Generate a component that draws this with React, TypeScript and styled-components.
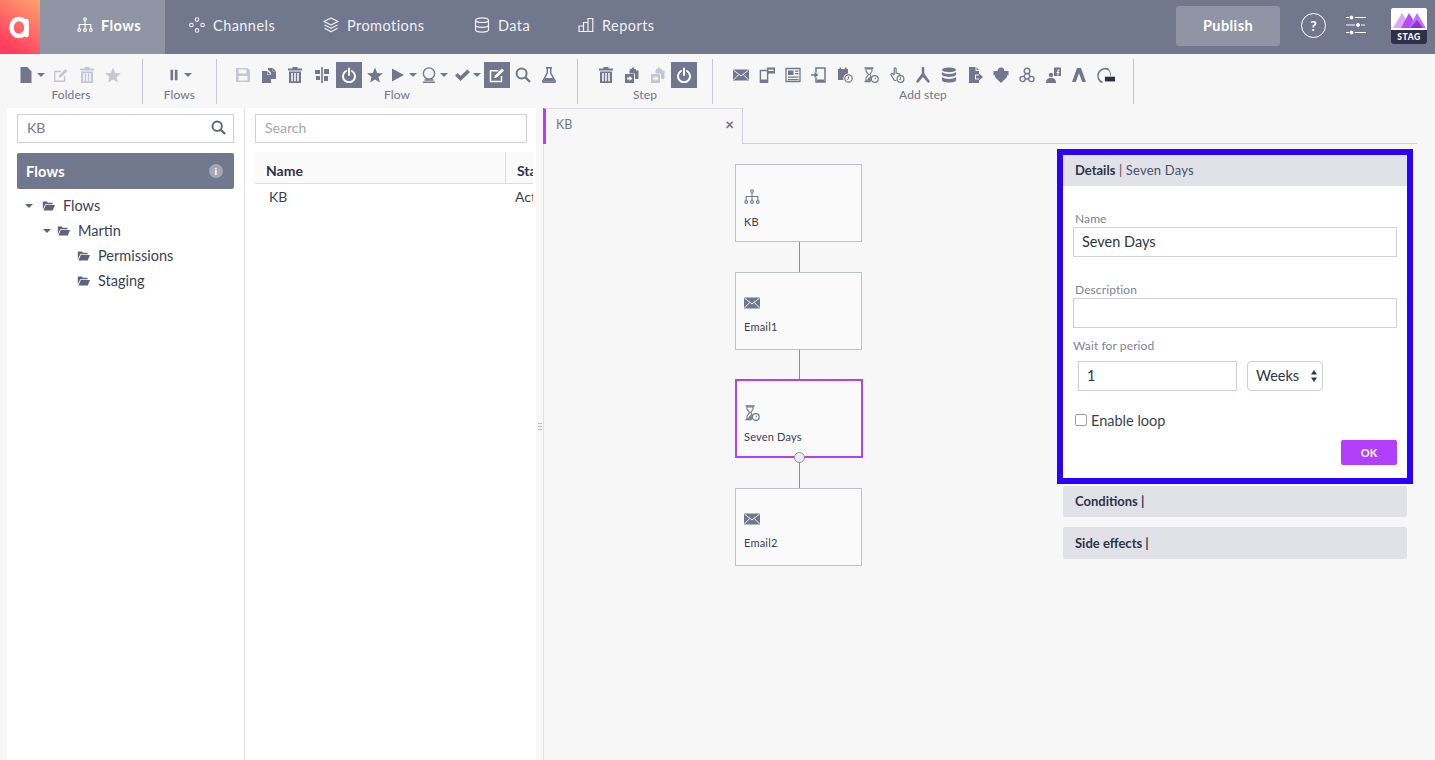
import React from "react";
import styled, { createGlobalStyle } from "styled-components";

const GlobalStyle = createGlobalStyle`
  html, body { margin: 0; padding: 0; height: 100%; background: #f7f7f7; overflow: hidden; }
  body { font-family: "Lato", "Open Sans", sans-serif; color: #2f3349; }
  * { box-sizing: border-box; }
`;

const slate = "#71788d";
const purple = "#b23ffb";

const Page = styled.div`
  width: 1435px;
  height: 760px;
  display: flex;
  flex-direction: column;
  overflow: hidden;
`;

const TopBar = styled.header`
  height: 54px;
  flex: none;
  display: flex;
  align-items: stretch;
  background: ${slate};
`;

const LogoBox = styled.div`
  width: 40px;
  display: flex;
  align-items: center;
  justify-content: center;
  background: linear-gradient(215deg, #ffa46e 0%, #ff3d5e 85%);
`;

const NavTab = styled.div<{ $active?: boolean; $w: number }>`
  width: ${(p) => p.$w}px;
  display: flex;
  align-items: center;
  gap: 8px;
  padding-left: ${(p) => (p.$active ? 37 : 24)}px;
  padding-bottom: 4px;
  font-size: 14.5px;
  font-weight: ${(p) => (p.$active ? 700 : 400)};
  letter-spacing: 0.45px;
  color: ${(p) => (p.$active ? "#fff" : "#f0f1f4")};
  background: ${(p) => (p.$active ? "#9095a6" : "transparent")};
`;

const TopRight = styled.div`
  margin-left: auto;
  display: flex;
  align-items: center;
  padding-right: 8px;
  padding-bottom: 4px;
`;

const PublishButton = styled.button`
  width: 104px;
  height: 40px;
  margin-top: 2px;
  padding-bottom: 3px;
  border: 0;
  border-radius: 3px;
  background: #9095a6;
  color: #fff;
  font: 700 14.5px "Lato", sans-serif;
  letter-spacing: 0.4px;
`;

const HelpCircle = styled.div`
  width: 25px;
  height: 25px;
  margin: 0 0 0 21px;
  border: 1.5px solid #fff;
  border-radius: 50%;
  color: #fff;
  font-size: 14px;
  font-weight: 700;
  display: flex;
  align-items: center;
  justify-content: center;
`;

const SliderSlot = styled.div`
  width: 20px;
  height: 20px;
  margin-left: 20px;
  margin-right: 25px;
  display: flex;
  color: #fff;
`;

const StagBadge = styled.div`
  width: 36px;
  height: 36px;
  margin-top: 2px;
  border-radius: 2px;
  overflow: hidden;
  background: #fff;
  display: flex;
  flex-direction: column;
`;

const StagArt = styled.div`
  height: 22px;
  display: flex;
  align-items: flex-end;
`;

const StagLabel = styled.div`
  flex: 1;
  background: #2d3047;
  color: #fff;
  font-size: 8.5px;
  font-weight: 900;
  letter-spacing: 0.6px;
  display: flex;
  align-items: center;
  justify-content: center;
`;

const ToolBar = styled.div`
  height: 54px;
  flex: none;
  display: flex;
  padding-top: 5px;
`;

const ToolGroup = styled.div<{ $w: number; $pad: number; $line?: boolean }>`
  width: ${(p) => p.$w}px;
  height: 45px;
  padding-left: ${(p) => p.$pad}px;
  border-right: ${(p) => (p.$line ? "1px solid #c5c8d3" : "0")};
  display: flex;
  flex-direction: column;
`;

const ToolRow = styled.div`
  height: 26px;
  margin-top: 3px;
  display: flex;
`;

const ToolLabel = styled.div<{ $pad: number }>`
  margin-left: -${(p) => p.$pad}px;
  margin-top: -1px;
  text-align: center;
  font-size: 12px;
  font-weight: 400;
  letter-spacing: 0.1px;
  color: #6f758b;
`;

const ToolButton = styled.div<{ $active?: boolean; $w?: number; $off?: boolean }>`
  width: ${(p) => p.$w ?? 26}px;
  height: 26px;
  flex: none;
  display: flex;
  align-items: center;
  justify-content: center;
  gap: 3px;
  background: ${(p) => (p.$active ? slate : "transparent")};
  color: ${(p) => (p.$active ? "#fff" : p.$off ? "#c4c7d2" : slate)};
`;

const Caret = styled.span<{ $color?: string; $size?: number }>`
  width: 0;
  height: 0;
  flex: none;
  border-left: ${(p) => p.$size ?? 4}px solid transparent;
  border-right: ${(p) => p.$size ?? 4}px solid transparent;
  border-top: ${(p) => p.$size ?? 4}px solid ${(p) => p.$color ?? slate};
`;

const Body = styled.div`
  flex: 1;
  min-height: 0;
  display: flex;
  padding-left: 7px;
`;

const LeftPanel = styled.aside`
  width: 238px;
  flex: none;
  background: #fff;
  border-right: 1px solid #e4e5ea;
  padding: 6px 10px 0 10px;
`;

const SearchBox = styled.div`
  height: 29px;
  border: 1px solid #cfd0dc;
  background: #fff;
  display: flex;
  align-items: center;
  justify-content: space-between;
  padding: 0 7px 2px 9px;
  font-size: 14px;
  color: ${slate};
`;

const PanelHead = styled.div`
  height: 36px;
  margin-top: 10px;
  border-radius: 2px;
  background: ${slate};
  color: #fff;
  font-size: 14.5px;
  font-weight: 700;
  letter-spacing: 0.2px;
  display: flex;
  align-items: center;
  justify-content: space-between;
  padding: 0 11px 0 9px;
`;

const InfoDot = styled.span`
  width: 14px;
  height: 14px;
  border-radius: 50%;
  background: #a4a8b6;
  color: #fff;
  font-size: 10px;
  font-weight: 900;
  display: flex;
  align-items: center;
  justify-content: center;
`;

const Tree = styled.div`
  margin-top: 4px;
`;

const TreeRow = styled.div<{ $indent: number }>`
  height: 25px;
  padding-left: ${(p) => p.$indent}px;
  display: flex;
  align-items: center;
  font-size: 14.5px;
  color: #3b3f55;
`;

const TreeCaret = styled.span<{ $w: number }>`
  width: ${(p) => p.$w}px;
  display: flex;
`;

const FolderSlot = styled.span`
  width: 21px;
  display: flex;
  color: #5d6379;
`;

const ListPanel = styled.section`
  width: 291px;
  flex: none;
  background: #fff;
  padding: 6px 0 0 10px;
  overflow: hidden;
`;

const ListSearch = styled.input`
  display: block;
  width: 272px;
  height: 29px;
  border: 1px solid #cfd0dc;
  padding: 0 9px 2px;
  font: 14px "Lato", sans-serif;
  outline: none;
  &::placeholder { color: #a4a7b5; }
`;

const ListHead = styled.div`
  height: 32px;
  margin-top: 9px;
  background: #fafafa;
  border-bottom: 1px solid #dcdde3;
  display: grid;
  grid-template-columns: 250px 1fr;
  font-size: 14px;
  font-weight: 700;
  color: #2f3349;
  overflow: hidden;
`;

const HeadCell = styled.div<{ $divider?: boolean }>`
  padding: 10px 0 0 11px;
  border-left: ${(p) => (p.$divider ? "1px solid #dcdde3" : "0")};
  white-space: nowrap;
`;

const ListRow = styled.div`
  height: 25px;
  display: grid;
  grid-template-columns: 250px 1fr;
  align-items: center;
  font-size: 14px;
  color: #3b3f55;
  overflow: hidden;
`;

const RowCell = styled.div<{ $pad: number }>`
  padding-left: ${(p) => p.$pad}px;
  white-space: nowrap;
`;

const Clip = styled.div`
  width: 278px;
  overflow: hidden;
`;

const Handle = styled.div`
  width: 7px;
  flex: none;
  display: flex;
  align-items: center;
  justify-content: center;
  padding-bottom: 14px;
`;

const HandleDots = styled.div`
  width: 4px;
  height: 10px;
  background: radial-gradient(circle, #b8bbc6 0.8px, transparent 1px) 0 0 / 2px 3px;
`;

const Workspace = styled.main`
  flex: 1;
  min-width: 0;
  border-left: 1px solid #e1e2e7;
  display: flex;
  flex-direction: column;
`;

const TabStrip = styled.div`
  height: 36px;
  flex: none;
  margin-right: 18px;
  border-bottom: 1px solid #cfd0dc;
  display: flex;
`;

const FlowTab = styled.div`
  width: 200px;
  height: 36px;
  margin-left: -1px;
  background: #f7f7f7;
  border-left: 3px solid ${purple};
  border-right: 1px solid #cfd0dc;
  border-top: 1px solid #dcdde3;
  padding: 0 8px 5px 10px;
  display: flex;
  align-items: center;
  justify-content: space-between;
  font-size: 12.5px;
  color: ${slate};
`;

const CloseMark = styled.span`
  font-size: 15px;
  font-weight: 700;
  color: #6a7085;
`;

const Stage = styled.div`
  flex: 1;
  min-height: 0;
  display: flex;
`;

const Canvas = styled.div`
  width: 513px;
  flex: none;
  padding: 20px 0 0 191px;
  display: flex;
  flex-direction: column;
`;

const FlowNode = styled.div<{ $selected?: boolean; $top: number }>`
  position: relative;
  width: ${(p) => (p.$selected ? 128 : 127)}px;
  height: ${(p) => (p.$selected ? 79 : 78)}px;
  flex: none;
  background: #fafafa;
  border: ${(p) => (p.$selected ? `2px solid ${purple}` : "1px solid #bcbfcc")};
  padding: ${(p) => p.$top}px 0 0 ${(p) => (p.$selected ? 7 : 8)}px;
  color: ${slate};
`;

const NodeText = styled.div<{ $gap: number }>`
  margin-top: ${(p) => p.$gap}px;
  font-size: 11px;
  color: #3b3f55;
  letter-spacing: 0.2px;
`;

const Connector = styled.div<{ $h?: number }>`
  width: 1px;
  height: ${(p) => p.$h ?? 30}px;
  margin-left: 64px;
  flex: none;
  background: #868b9d;
`;

const Port = styled.span`
  position: absolute;
  left: 57px;
  bottom: -7px;
  width: 11px;
  height: 11px;
  border-radius: 50%;
  border: 1px solid #8d91a2;
  background: #eeeeee;
`;

const SidePanels = styled.div`
  width: 356px;
  flex: none;
  padding-top: 5px;
  display: flex;
  flex-direction: column;
`;

const Highlight = styled.div`
  height: 335px;
  border: 6px solid #2b00ff;
  background: #fff;
`;

const DetailHead = styled.div`
  height: 31px;
  background: #e1e2e8;
  padding: 0 12px 1px;
  display: flex;
  align-items: center;
  font-size: 13px;
  font-weight: 700;
  color: #2f3349;
`;

const DetailSub = styled.span`
  font-weight: 400;
  color: #4a4f66;
  white-space: pre;
  letter-spacing: 0.2px;
`;

const Form = styled.div`
  padding: 27px 10px 0 10px;
`;

const FieldLabel = styled.div<{ $gap: number; $flush?: boolean }>`
  margin-top: ${(p) => p.$gap}px;
  padding-left: ${(p) => (p.$flush ? 0 : 2)}px;
  height: 14px;
  line-height: 12px;
  font-size: 12px;
  letter-spacing: 0.1px;
  color: #7d8397;
`;

const TextField = styled.input<{ $w: number }>`
  display: block;
  width: ${(p) => p.$w}px;
  height: 30px;
  border: 1px solid #cfd0dc;
  background: #fff;
  padding: 0 8px 2px;
  font: 14.5px "Lato", sans-serif;
  color: #2f3349;
  outline: none;
`;

const PeriodRow = styled.div`
  margin-top: 7px;
  padding-left: 5px;
  display: flex;
  gap: 10px;
`;

const SelectWrap = styled.div`
  position: relative;
  width: 76px;
  height: 30px;
`;

const PeriodSelect = styled.select`
  width: 100%;
  height: 100%;
  appearance: none;
  border: 1px solid #cfd0dc;
  border-radius: 4px;
  background: #fff;
  padding: 0 0 2px 8px;
  font: 14.5px "Lato", sans-serif;
  color: #2f3349;
`;

const SelectArrows = styled.span`
  position: absolute;
  right: 5px;
  top: 8px;
  display: flex;
  pointer-events: none;
`;

const LoopRow = styled.label`
  margin-top: 21px;
  padding-left: 2px;
  height: 16px;
  display: flex;
  align-items: center;
  gap: 4px;
  font-size: 14.5px;
  color: #3b3f55;
`;

const LoopBox = styled.input`
  appearance: none;
  width: 12px;
  height: 12px;
  margin: 0;
  border: 1px solid #9a9dab;
  border-radius: 2px;
  background: #fff;
`;

const FormFoot = styled.div`
  margin-top: 12px;
  display: flex;
  justify-content: flex-end;
`;

const OkButton = styled.button`
  width: 56px;
  height: 25px;
  border: 0;
  border-radius: 2px;
  background: ${purple};
  color: #fff;
  font: 700 11px "Lato", sans-serif;
`;

const Collapsed = styled.div<{ $gap: number; $h: number }>`
  height: ${(p) => p.$h}px;
  margin: ${(p) => p.$gap}px 6px 0 6px;
  background: #e1e2e8;
  border-radius: 2px;
  padding: 0 12px 1px;
  display: flex;
  align-items: center;
  font-size: 13px;
  font-weight: 700;
  color: #2f3349;
`;

type GlyphProps = { name: keyof typeof glyphs; size?: number };

// hand drawn toolbar set, all on a 16 grid
const glyphs = {
  file: <path d="M2.500 0h7l4 4.500V16h-11z" fill="currentColor" />,
  edit: (
    <g fill="none" stroke="currentColor" strokeWidth="1.400">
      <path d="M11.500 9v5.300H1.700V4.500H8" />
      <path d="M5.600 10.600l.8-2.600L12.600 2l1.900 1.900-6.200 6z" fill="currentColor" stroke="none" />
    </g>
  ),
  trash: (
    <path
      fillRule="evenodd"
      d="M5.500 0h5v1.500H15v2H1v-2h4.500zM2 4.500h12V16H2zM4.200 6v8.200h1.600V6zm3 0v8.200h1.600V6zm3 0v8.200h1.600V6z"
      fill="currentColor"
    />
  ),
  star: <path d="M8 .6l2.200 5.300 5.700.4-4.400 3.700 1.400 5.600L8 12.600l-4.900 3 1.400-5.600L.1 6.300l5.700-.4z" fill="currentColor" />,
  pause: <path d="M4 2h3v12H4zM9 2h3v12H9z" fill="currentColor" />,
  save: (
    <path
      fillRule="evenodd"
      d="M1 1h11.500L15 3.500V15H1zM3.500 2.500v4h8v-4zM3.500 9v4.500h9V9z"
      fill="currentColor"
    />
  ),
  copy: (
    <path
      d="M7 1h4.500v3.500H15V12H10V5.500L7 2.800zM11.800 1L15 4.200h-3.200zM1 4h5v4h4v8H1zM6.400 4L10 7.600H6.400z"
      fill="currentColor"
    />
  ),
  align: (
    <path d="M7.200 0h1.600v16H7.200zM1 3h5v4H1zM10 2h5v5h-5zM2 9h4v4H2zM10 9h4v5h-4z" fill="currentColor" />
  ),
  power: (
    <g fill="none" stroke="currentColor" strokeWidth="2" strokeLinecap="round">
      <path d="M5 4a6 6 0 1 0 6 0" />
      <path d="M8 1.500V8" />
    </g>
  ),
  play: <path d="M2 1.500l12 6.500-12 6.500z" fill="currentColor" />,
  bulb: (
    <g fill="none" stroke="currentColor" strokeWidth="1.400">
      <circle cx="8" cy="6.500" r="5.600" />
      <path d="M3.500 13h9M2 15.300h12" />
    </g>
  ),
  check: <path d="M1 8.500l2.600-2.400 3 3L13.400 2.600 16 5 6.600 14z" fill="currentColor" />,
  editBox: (
    <g fill="none" stroke="currentColor" strokeWidth="1.500">
      <path d="M12.500 9v5.500H1.500V3.800h8" />
      <path d="M5.200 11.200l.9-3L13 1.500l2 2-6.800 6.800z" fill="currentColor" stroke="none" />
    </g>
  ),
  search: (
    <g fill="none" stroke="currentColor" strokeWidth="2">
      <circle cx="6.600" cy="6.600" r="5" />
      <path d="M10.400 10.400L15 15" strokeWidth="2.400" />
    </g>
  ),
  flask: (
    <g fill="none" stroke="currentColor" strokeWidth="1.500">
      <path d="M5 .8h6M6.300 1v5L1.800 14.200c-.3.6 0 1 .6 1h11.200c.6 0 .9-.4.6-1L9.700 6V1" />
      <path d="M4.200 11h7.600l1.600 3.400H2.600z" fill="currentColor" stroke="none" />
    </g>
  ),
  clipSwap: (
    <g fill="currentColor">
      <path d="M6 2h1.800V.5h2.400V2H12v1.500h2.500V12H11V6.500H5.500V3.500H6z" />
      <path fillRule="evenodd" d="M1 7h9v9H1zM3 10.500h2.500V9l3 2.500-3 2.500v-1.500H3z" />
    </g>
  ),
  mail: (
    <g>
      <path d="M0 2.500h16v11H0z" fill="currentColor" />
      <path d="M.4 3l7.600 6 7.600-6M.4 13L5.800 7.400M15.600 13l-5.400-5.600" fill="none" stroke="#fafafa" strokeWidth=".9" />
    </g>
  ),
  mobileSms: (
    <g>
      <path d="M1.400 3.500h7.200v12H1.400z" fill="none" stroke="currentColor" strokeWidth="1.400" />
      <path d="M2 12.500h6V15H2zM8 .5h8v6h-6l-2 1.500z" fill="currentColor" />
      <path d="M9.400 2.600h5.200v1.400H9.400z" fill="#f7f7f7" />
    </g>
  ),
  news: (
    <g>
      <path d="M1 1.500h14v13H1z" fill="none" stroke="currentColor" strokeWidth="1.300" />
      <path d="M3 3.500h5.500V8H3zM10 3.500h3.500v1.200H10zM10 6h3.500v1.200H10zM3 9.500h10.500v1.200H3zM3 12h10.500v1.200H3z" fill="currentColor" />
    </g>
  ),
  mobileIn: (
    <g>
      <path d="M5 5.500V1h9v14H5v-4.500" fill="none" stroke="currentColor" strokeWidth="1.500" />
      <path d="M0 7.200h3.500V5L7.500 8l-4 3V8.800H0zM6 12.500h7V15H6z" fill="currentColor" />
    </g>
  ),
  calClock: (
    <g>
      <path d="M1 2h1.500V.5H4V2h4V.5h1.500V2H11v4.500a5 5 0 0 0-4.500 6.500H1z" fill="currentColor" />
      <circle cx="11.500" cy="11.500" r="3.700" fill="none" stroke="currentColor" strokeWidth="1.200" />
      <path d="M11.500 9.500v2.200l-1.500 1" fill="none" stroke="currentColor" />
    </g>
  ),
  hourClock: (
    <g>
      <path d="M1.500 1h9M1.500 14.500h6" stroke="currentColor" strokeWidth="1.600" fill="none" />
      <path d="M3 2v2.200L5.600 7.600 3 11v3h4.400a4 4 0 0 1 .6-4.800L6.800 7.600 9 4.200V2z" fill="none" stroke="currentColor" strokeWidth="1.100" />
      <path d="M3.800 13.600l2.400-3.600 1.500 1.800-.6 1.800z" fill="currentColor" />
      <circle cx="11.800" cy="12" r="3.400" fill="none" stroke="currentColor" strokeWidth="1.200" />
      <path d="M13 10.600l-1.200 1.600" stroke="currentColor" />
    </g>
  ),
  handClock: (
    <g fill="none" stroke="currentColor" strokeWidth="1.200">
      <path d="M5.200 8V1.800c0-1.200 1.900-1.200 1.900 0V6l3 .8c.8.3 1.100.8 1 1.600M5.200 8L3.400 6.800c-1-.6-1.900.5-1.200 1.300l3.200 5.400h2" />
      <circle cx="11.500" cy="12" r="3.400" />
      <path d="M11.500 10.200V12l-1.200.8" />
    </g>
  ),
  split: (
    <path d="M6.800 0h2.400v6.400L15 14.400 13.200 16 8 10 2.800 16 1 14.400l5.800-8z" fill="currentColor" />
  ),
  db: (
    <path
      d="M8 .5c4 0 7 1 7 2.300S12 5.200 8 5.200 1 4.100 1 2.800 4 .5 8 .5zM1 5c1 1.200 4 1.900 7 1.900S14 6.200 15 5v2.600c0 1.300-3 2.300-7 2.300S1 8.900 1 7.600zM1 10c1 1.200 4 1.900 7 1.900s6-.7 7-1.900v3.200c0 1.300-3 2.300-7 2.300s-7-1-7-2.300z"
      fill="currentColor"
    />
  ),
  fileOut: (
    <g fill="currentColor">
      <path d="M2 0h6.500v4H12v3.500H8V12.500h4V16H2z" />
      <path d="M9.500 .3L12 3H9.500zM9 8.500h3V6.500l4 3.500-4 3.500v-2H9z" />
    </g>
  ),
  puzzle: (
    <path
      d="M.5 4h4.300c-.6-1.500.7-3.500 3.200-3.500s3.800 2 3.200 3.500h4.300v4.500c-1.200-.5-1.500.2-1.500 1 0 .6-.2 1-.8 1.500L8 16 2.800 11c-.6-.5-.8-.9-.8-1.500 0-.8-.3-1.500-1.500-1z"
      fill="currentColor"
    />
  ),
  webhook: (
    <g fill="none" stroke="currentColor" strokeWidth="1.400">
      <circle cx="8" cy="4" r="2.800" />
      <circle cx="3.600" cy="12" r="2.600" />
      <circle cx="12.400" cy="12" r="2.600" />
      <path d="M6.600 6.500L4.500 10M9.400 6.500L11.500 10M6.200 12h3.600" />
    </g>
  ),
  fbPeople: (
    <g fill="currentColor">
      <path d="M9 .5h7V9H9z" />
      <circle cx="6" cy="8" r="2.200" />
      <path d="M1 16c0-3.500 1.500-5 5-5s5 1.500 5 5z" />
      <path d="M13 2.500h1.500v1h-1V5h1l-.2 1h-.8v2.500h-1.100V6h-.9V5h.9V3.800c0-.8.300-1.300.6-1.300z" fill="#f7f7f7" />
    </g>
  ),
  lambda: <path d="M6 1h4l5 14h-3.800L8 6.300 4.800 15H1z" fill="currentColor" />,
  ringTag: (
    <g>
      <path d="M10.800 3.200A6 6 0 1 0 5.500 13.900" fill="none" stroke="currentColor" strokeWidth="1.400" />
      <path d="M10.800 3.200a6 6 0 0 1 1.400 5" fill="none" stroke="currentColor" strokeWidth=".8" />
      <path d="M7.500 9h8.500v4H7.500z" fill="#2d3047" />
    </g>
  ),
  hierarchy: (
    <g fill="none" stroke="currentColor" strokeWidth="1.100">
      <circle cx="8" cy="2" r="1.300" />
      <path d="M8 3.300V11.500M2.200 11.500V7.500h11.600v4" />
      <circle cx="2.200" cy="13" r="1.400" />
      <circle cx="8" cy="13" r="1.400" />
      <circle cx="13.800" cy="13" r="1.400" />
    </g>
  ),
  channels: (
    <g fill="none" stroke="currentColor" strokeWidth="1.100">
      <circle cx="8" cy="2.600" r="1.800" />
      <circle cx="2.400" cy="8" r="1.800" />
      <circle cx="13.600" cy="8" r="1.800" />
      <circle cx="8" cy="13.400" r="1.800" />
    </g>
  ),
  layers: (
    <g fill="none" stroke="currentColor" strokeWidth="1.200" strokeLinejoin="round">
      <path d="M8 1l7 3.500L8 8 1 4.500z" />
      <path d="M1.500 8L8 11.300 14.500 8M1.500 11.300L8 14.800l6.500-3.500" />
    </g>
  ),
  dataStack: (
    <g fill="none" stroke="currentColor" strokeWidth="1.200">
      <ellipse cx="8" cy="3.200" rx="6.500" ry="2.300" />
      <path d="M1.500 3.200v9.600c0 1.300 2.900 2.300 6.500 2.300s6.500-1 6.500-2.300V3.200M1.500 8c0 1.300 2.900 2.300 6.500 2.300s6.500-1 6.500-2.300" />
    </g>
  ),
  bars: (
    <g fill="none" stroke="currentColor" strokeWidth="1.200">
      <path d="M1 9h4.500v5.500H1zM5.500 5.500H10v9H5.500zM10 1.500h4.800v13H10z" />
    </g>
  ),
  folderOpen: (
    <path d="M1 3h5l1.200 1.500H13V6.500H4L1 13zM4.600 7.500H16L13.200 14H1.800z" fill="currentColor" />
  ),
  sliders: (
    <g stroke="currentColor" strokeWidth="1" fill="currentColor">
      <path d="M0 2.500h3M9 2.500h11M0 10h9M15 10h4M0 17.500h3M9 17.500h11" fill="none" />
      <circle cx="5.500" cy="2.500" r="1.500" />
      <circle cx="12" cy="10" r="1.500" />
      <circle cx="5.500" cy="17.500" r="1.500" />
    </g>
  ),
};

const Glyph = ({ name, size = 16 }: GlyphProps) => {
  const box = name === "sliders" ? "0 0 20 20" : "0 0 16 16";
  return (
    <svg width={size} height={size} viewBox={box} style={{ display: "block", flex: "none" }}>
      {glyphs[name]}
    </svg>
  );
};

const flowTools: { icon: GlyphProps["name"]; active?: boolean; off?: boolean; caret?: boolean; w?: number }[] = [
  { icon: "save", off: true },
  { icon: "copy" },
  { icon: "trash" },
  { icon: "align", w: 28 },
  { icon: "power", active: true },
  { icon: "star" },
  { icon: "play", caret: true, w: 30 },
  { icon: "bulb", caret: true, w: 32 },
  { icon: "check", caret: true, w: 34 },
  { icon: "editBox", active: true },
  { icon: "search" },
  { icon: "flask" },
];

const addSteps: GlyphProps["name"][] = [
  "mail", "mobileSms", "news", "mobileIn", "calClock", "hourClock", "handClock",
  "split", "db", "fileOut", "puzzle", "webhook", "fbPeople", "lambda",
];

const navItems: { label: string; icon: GlyphProps["name"]; w: number }[] = [
  { label: "Channels", icon: "channels", w: 134 },
  { label: "Promotions", icon: "layers", w: 151 },
  { label: "Data", icon: "dataStack", w: 104 },
  { label: "Reports", icon: "bars", w: 120 },
];

export default function App() {
  return (
    <Page>
      <GlobalStyle />
      <TopBar>
        <LogoBox>
          <svg width="24" height="26" viewBox="0 0 24 26">
            <ellipse cx="11" cy="13.500" rx="7.500" ry="8.500" fill="none" stroke="#fff" strokeWidth="4.500" />
            <path d="M18.500 7v14" stroke="#fff" strokeWidth="4.500" strokeLinecap="round" />
          </svg>
        </LogoBox>
        <NavTab $active $w={125}>
          <Glyph name="hierarchy" />
          Flows
        </NavTab>
        {navItems.map((n) => (
          <NavTab key={n.label} $w={n.w}>
            <Glyph name={n.icon} />
            {n.label}
          </NavTab>
        ))}
        <TopRight>
          <PublishButton>Publish</PublishButton>
          <HelpCircle>?</HelpCircle>
          <SliderSlot>
            <Glyph name="sliders" size={20} />
          </SliderSlot>
          <StagBadge>
            <StagArt>
              <svg width="36" height="22" viewBox="0 0 36 22">
                <path d="M2 20L11 5l6 10-3 5z" fill="#d9a8f7" />
                <path d="M10 20l8-15 9 15z" fill="#b84bf8" />
                <path d="M18 20l8-15 9 15z" fill="#c271f9" />
                <path d="M19 20l7-8 6 8z" fill="#8e33cc" />
              </svg>
            </StagArt>
            <StagLabel>STAG</StagLabel>
          </StagBadge>
        </TopRight>
      </TopBar>

      <ToolBar>
        <ToolGroup $w={143} $pad={15} $line>
          <ToolRow>
            <ToolButton $w={33}>
              <Glyph name="file" />
              <Caret />
            </ToolButton>
            <ToolButton $off><Glyph name="edit" /></ToolButton>
            <ToolButton $off><Glyph name="trash" /></ToolButton>
            <ToolButton $off><Glyph name="star" /></ToolButton>
          </ToolRow>
          <ToolLabel $pad={15}>Folders</ToolLabel>
        </ToolGroup>
        <ToolGroup $w={74} $pad={23} $line>
          <ToolRow>
            <ToolButton $w={26}>
              <Glyph name="pause" size={14} />
              <Caret />
            </ToolButton>
          </ToolRow>
          <ToolLabel $pad={23}>Flows</ToolLabel>
        </ToolGroup>
        <ToolGroup $w={361} $pad={13} $line>
          <ToolRow>
            {flowTools.map((t, i) => (
              <ToolButton key={i} $active={t.active} $off={t.off} $w={t.w}>
                <Glyph name={t.icon} />
                {t.caret && <Caret />}
              </ToolButton>
            ))}
          </ToolRow>
          <ToolLabel $pad={13}>Flow</ToolLabel>
        </ToolGroup>
        <ToolGroup $w={135} $pad={15} $line>
          <ToolRow>
            <ToolButton><Glyph name="trash" /></ToolButton>
            <ToolButton><Glyph name="clipSwap" /></ToolButton>
            <ToolButton $off><Glyph name="clipSwap" /></ToolButton>
            <ToolButton $active><Glyph name="power" /></ToolButton>
          </ToolRow>
          <ToolLabel $pad={15}>Step</ToolLabel>
        </ToolGroup>
        <ToolGroup $w={421} $pad={15} $line>
          <ToolRow>
            {addSteps.map((s) => (
              <ToolButton key={s}><Glyph name={s} /></ToolButton>
            ))}
            <ToolButton><Glyph name="ringTag" size={19} /></ToolButton>
          </ToolRow>
          <ToolLabel $pad={15}>Add step</ToolLabel>
        </ToolGroup>
      </ToolBar>

      <Body>
        <LeftPanel>
          <SearchBox>
            KB
            <span style={{ color: "#5d6379" }}><Glyph name="search" size={15} /></span>
          </SearchBox>
          <PanelHead>
            Flows
            <InfoDot>i</InfoDot>
          </PanelHead>
          <Tree>
            <TreeRow $indent={8}>
              <TreeCaret $w={17}><Caret $size={4} $color="#5d6379" /></TreeCaret>
              <FolderSlot><Glyph name="folderOpen" size={13} /></FolderSlot>
              Flows
            </TreeRow>
            <TreeRow $indent={26}>
              <TreeCaret $w={14}><Caret $size={4} $color="#5d6379" /></TreeCaret>
              <FolderSlot><Glyph name="folderOpen" size={13} /></FolderSlot>
              Martin
            </TreeRow>
            <TreeRow $indent={60}>
              <FolderSlot><Glyph name="folderOpen" size={13} /></FolderSlot>
              Permissions
            </TreeRow>
            <TreeRow $indent={60}>
              <FolderSlot><Glyph name="folderOpen" size={13} /></FolderSlot>
              Staging
            </TreeRow>
          </Tree>
        </LeftPanel>

        <ListPanel>
          <ListSearch placeholder="Search" />
          <Clip>
            <ListHead>
              <HeadCell>Name</HeadCell>
              <HeadCell $divider>Status</HeadCell>
            </ListHead>
            <ListRow>
              <RowCell $pad={14}>KB</RowCell>
              <RowCell $pad={10}>Active</RowCell>
            </ListRow>
          </Clip>
        </ListPanel>
        <Handle><HandleDots /></Handle>

        <Workspace>
          <TabStrip>
            <FlowTab>
              KB
              <CloseMark>×</CloseMark>
            </FlowTab>
          </TabStrip>
          <Stage>
            <Canvas>
              <FlowNode $top={24}>
                <Glyph name="hierarchy" />
                <NodeText $gap={10}>KB</NodeText>
              </FlowNode>
              <Connector />
              <FlowNode $top={22}>
                <Glyph name="mail" />
                <NodeText $gap={9}>Email1</NodeText>
              </FlowNode>
              <Connector $h={29} />
              <FlowNode $selected $top={24}>
                <Glyph name="hourClock" />
                <NodeText $gap={9}>Seven Days</NodeText>
                <Port />
              </FlowNode>
              <Connector />
              <FlowNode $top={22}>
                <Glyph name="mail" />
                <NodeText $gap={9}>Email2</NodeText>
              </FlowNode>
            </Canvas>
            <SidePanels>
              <Highlight>
                <DetailHead>
                  Details
                  <DetailSub> | Seven Days</DetailSub>
                </DetailHead>
                <Form>
                  <FieldLabel $gap={0}>Name</FieldLabel>
                  <TextField $w={324} readOnly value="Seven Days" />
                  <FieldLabel $gap={27}>Description</FieldLabel>
                  <TextField $w={324} readOnly value="" />
                  <FieldLabel $gap={12} $flush>Wait for period</FieldLabel>
                  <PeriodRow>
                    <TextField $w={159} readOnly value="1" />
                    <SelectWrap>
                      <PeriodSelect defaultValue="Weeks">
                        <option>Weeks</option>
                        <option>Days</option>
                      </PeriodSelect>
                      <SelectArrows>
                        <svg width="8" height="14" viewBox="0 0 8 14">
                          <path d="M4 1l3 4.500H1zM4 13L1 8.500h6z" fill="#2f3349" />
                        </svg>
                      </SelectArrows>
                    </SelectWrap>
                  </PeriodRow>
                  <LoopRow>
                    <LoopBox type="checkbox" />
                    Enable loop
                  </LoopRow>
                  <FormFoot>
                    <OkButton>OK</OkButton>
                  </FormFoot>
                </Form>
              </Highlight>
              <Collapsed $gap={2} $h={31}>Conditions |</Collapsed>
              <Collapsed $gap={10} $h={32}>Side effects |</Collapsed>
            </SidePanels>
          </Stage>
        </Workspace>
      </Body>
    </Page>
  );
}
